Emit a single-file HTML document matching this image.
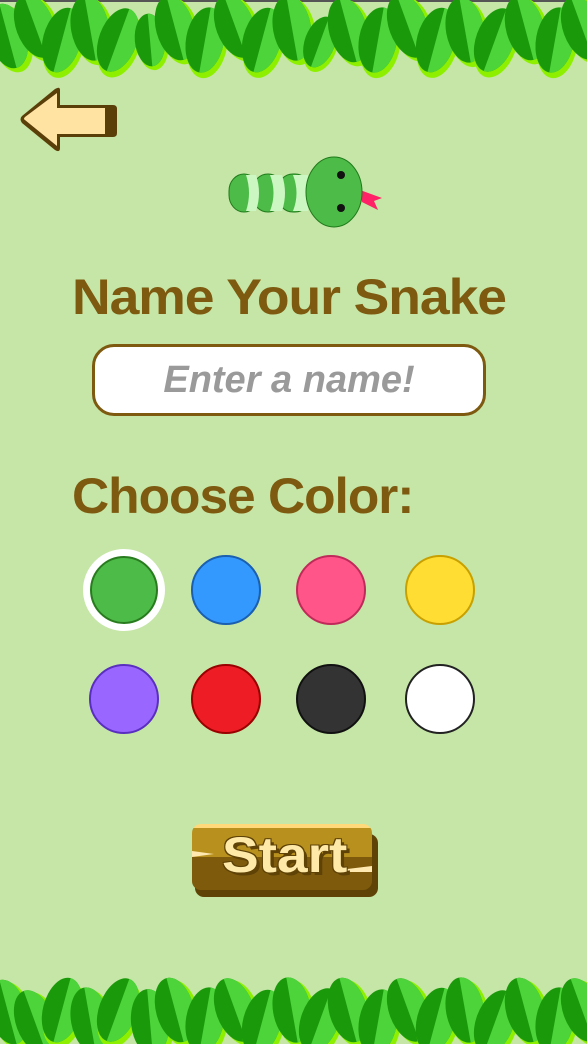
<!DOCTYPE html>
<html><head><meta charset="utf-8"><style>
body{margin:0;width:587px;height:1044px;overflow:hidden;background:#c5e6a6;position:relative;font-family:"Liberation Sans",sans-serif}
.t{position:absolute;color:#7d5a0f;font-weight:bold;white-space:nowrap;transform-origin:left center}
.c{position:absolute;width:68px;height:68px;border-radius:50%;box-sizing:border-box;border:2px solid}
</style></head><body>
<div style="position:absolute;top:0;left:0;width:587px;height:2px;background:#555"></div>
<svg width="587" height="1044" style="position:absolute;left:0;top:0">
<defs>
<g id="lf"><ellipse cx="3" cy="4" rx="20" ry="34" fill="#8ef000"/><ellipse cx="0" cy="0" rx="19" ry="33" fill="#1a9a0a"/><path d="M0,-33 A19,33 0 0 1 0,33 Z" fill="#4cd43a"/></g>
</defs>
<g>
<use href="#lf" transform="translate(8,36) rotate(-15)"/>
<use href="#lf" transform="translate(35,26) rotate(-20)"/>
<use href="#lf" transform="translate(62,40) rotate(15)"/>
<use href="#lf" transform="translate(90,28) rotate(-10)"/>
<use href="#lf" transform="translate(118,40) rotate(20)"/>
<use href="#lf" transform="translate(150,40) rotate(-5) scale(0.8)"/>
<use href="#lf" transform="translate(175,28) rotate(-15)"/>
<use href="#lf" transform="translate(205,40) rotate(10)"/>
<use href="#lf" transform="translate(235,26) rotate(-20)"/>
<use href="#lf" transform="translate(262,40) rotate(15)"/>
<use href="#lf" transform="translate(292,28) rotate(-10)"/>
<use href="#lf" transform="translate(320,42) rotate(20) scale(0.8)"/>
<use href="#lf" transform="translate(348,30) rotate(-15)"/>
<use href="#lf" transform="translate(378,40) rotate(10)"/>
<use href="#lf" transform="translate(408,26) rotate(-20)"/>
<use href="#lf" transform="translate(436,40) rotate(15)"/>
<use href="#lf" transform="translate(465,30) rotate(-10)"/>
<use href="#lf" transform="translate(495,40) rotate(20)"/>
<use href="#lf" transform="translate(525,28) rotate(-15)"/>
<use href="#lf" transform="translate(555,40) rotate(10)"/>
<use href="#lf" transform="translate(582,28) rotate(-20)"/>
</g>
<g>
<use href="#lf" transform="translate(8,1012) rotate(-15)"/>
<use href="#lf" transform="translate(35,1022) rotate(-20)"/>
<use href="#lf" transform="translate(62,1010) rotate(15)"/>
<use href="#lf" transform="translate(90,1020) rotate(-10)"/>
<use href="#lf" transform="translate(118,1010) rotate(20)"/>
<use href="#lf" transform="translate(150,1022) rotate(-5)"/>
<use href="#lf" transform="translate(175,1010) rotate(-15)"/>
<use href="#lf" transform="translate(205,1020) rotate(10)"/>
<use href="#lf" transform="translate(235,1010) rotate(-20)"/>
<use href="#lf" transform="translate(262,1022) rotate(15)"/>
<use href="#lf" transform="translate(292,1010) rotate(-10)"/>
<use href="#lf" transform="translate(320,1020) rotate(20)"/>
<use href="#lf" transform="translate(348,1010) rotate(-15)"/>
<use href="#lf" transform="translate(378,1022) rotate(10)"/>
<use href="#lf" transform="translate(408,1010) rotate(-20)"/>
<use href="#lf" transform="translate(436,1020) rotate(15)"/>
<use href="#lf" transform="translate(465,1010) rotate(-10)"/>
<use href="#lf" transform="translate(495,1022) rotate(20)"/>
<use href="#lf" transform="translate(525,1010) rotate(-15)"/>
<use href="#lf" transform="translate(555,1020) rotate(10)"/>
<use href="#lf" transform="translate(582,1010) rotate(-20)"/>
</g>
<!-- arrow -->
<path d="M60,90 L60,105 L113,105 Q117,105 117,109 L117,133 Q117,137 113,137 L60,137 L60,148 Q60,153 55,150 L22,123 Q19,119 22,116 L55,89 Q60,86 60,90 Z" fill="#5a3f08"/>
<path d="M57,93 L57,108 L105,108 L105,134 L57,134 L57,146 L25,120 Q23,119 25,117 Z" fill="#ffe3a3"/>
<!-- snake -->
<path d="M360,190 L382,198 L374,201 L378,210 L362,202 Z" fill="#ff2266"/>
<g stroke="#1f7a1a" stroke-width="1">
<rect x="229" y="174" width="30" height="38" rx="17" fill="#4cbb47"/>
<rect x="253" y="174" width="30" height="38" rx="15" fill="#4cbb47"/>
<rect x="278" y="174" width="32" height="38" rx="15" fill="#4cbb47"/>
</g>
<path d="M246,175 Q252,193 246,211 L256,211 Q262,193 256,175Z" fill="#ccf7c2"/>
<path d="M270,175 Q277,193 270,211 L282,211 Q288,193 282,175Z" fill="#ccf7c2"/>
<path d="M293,175 Q300,193 293,211 L308,211 Q312,193 308,175Z" fill="#ccf7c2"/>
<ellipse cx="334" cy="192" rx="28" ry="35" fill="#4cbb47" stroke="#1f7a1a"/>
<circle cx="341" cy="175" r="4" fill="#111"/><circle cx="341" cy="208" r="4" fill="#111"/>
</svg>
<div class="t" style="left:72px;top:268px;font-size:50px;letter-spacing:-1px;transform:scaleX(1.07)">Name Your Snake</div>
<div style="position:absolute;left:92px;top:344px;width:394px;height:72px;box-sizing:border-box;border:3px solid #7d5a0f;border-radius:22px;background:#fff;text-align:center;line-height:66px;font-size:38px;font-weight:bold;font-style:italic;color:#9a9a9a">Enter a name!</div>
<div class="t" style="left:72px;top:467px;font-size:50px;letter-spacing:-1px;transform:scaleX(1.03)">Choose Color:</div>
<div class="c" style="left:83px;top:549px;width:82px;height:82px;border:7px solid #fff;background:#4cbb47;box-shadow:inset 0 0 0 2px #2a7a20"></div>
<div class="c" style="left:191px;top:555px;width:70px;height:70px;background:#3399ff;border-color:#1a5fb0"></div>
<div class="c" style="left:296px;top:555px;width:70px;height:70px;background:#ff5588;border-color:#c02a5a"></div>
<div class="c" style="left:405px;top:555px;width:70px;height:70px;background:#ffdd33;border-color:#c8a000"></div>
<div class="c" style="left:89px;top:664px;width:70px;height:70px;background:#9966ff;border-color:#5a2fc0"></div>
<div class="c" style="left:191px;top:664px;width:70px;height:70px;background:#ee1c25;border-color:#900"></div>
<div class="c" style="left:296px;top:664px;width:70px;height:70px;background:#333;border-color:#111"></div>
<div class="c" style="left:405px;top:664px;width:70px;height:70px;background:#fff;border-color:#222"></div>
<!-- start -->
<div style="position:absolute;left:195px;top:834px;width:183px;height:63px;border-radius:9px;background:#5e4206"></div>
<div style="position:absolute;left:192px;top:824px;width:180px;height:66px;border-radius:9px;background:linear-gradient(#ffd97a 0,#ffd97a 4px,#b8901e 4px,#b8901e 50%,#7e5a0c 50%)"></div>
<div style="position:absolute;left:192px;top:851px;width:0;height:0;border-top:3px solid transparent;border-bottom:3px solid transparent;border-left:22px solid #ffe9b0"></div>
<div style="position:absolute;left:342px;top:866px;width:30px;height:6px;background:#ffe9b0;clip-path:polygon(0 60%,100% 0,100% 100%,0 100%)"></div>
<div style="position:absolute;left:222px;top:826px;font-size:50px;font-weight:bold;color:#ffe9a8;text-shadow:3px 3px 0 #5e4206,-1px -1px 0 #5e4206,1px -1px 0 #5e4206,-1px 1px 0 #5e4206;transform:scaleX(1.1);transform-origin:left center">Start</div>
</body></html>
